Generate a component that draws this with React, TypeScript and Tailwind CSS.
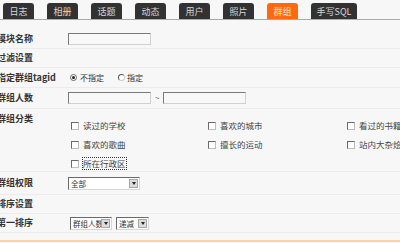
import React from "react";

const tabs = ["日志", "相册", "话题", "动态", "用户", "照片", "群组", "手写SQL"];

function Input({ w }: { w: string }) {
  return (
    <div className={`${w} h-[12px] border border-t-[#7a7a7a] border-l-[#7a7a7a] border-r-[#d0d0d0] border-b-[#d0d0d0] bg-[#f8f8f8]`} />
  );
}

function Check({ label, focus }: { label: string; focus?: boolean }) {
  return (
    <div className="flex items-center gap-[4px]">
      <div className="w-[8px] h-[8px] shrink-0 border border-t-[#6a6a6a] border-l-[#6a6a6a] border-r-[#bdbdbd] border-b-[#bdbdbd] bg-white" />
      <span className={`text-[8.5px] leading-[11px] text-[#444] whitespace-nowrap ${focus ? "outline outline-1 outline-dotted outline-[#333]" : ""}`}>{label}</span>
    </div>
  );
}

function Select({ w, text }: { w: string; text: string }) {
  return (
    <div className={`${w} h-[13px] flex items-center border border-t-[#6a6a6a] border-l-[#6a6a6a] border-r-[#d8d8d8] border-b-[#d8d8d8] bg-white`}>
      <span className="flex-1 pl-[2px] text-[7.5px] leading-[11px] text-[#333] overflow-hidden whitespace-nowrap">{text}</span>
      <div className="w-[9px] h-[9px] shrink-0 mr-[1px] bg-[#dcdcdc] border border-[#a8a8a8] flex items-center justify-center">
        <div className="w-0 h-0 border-l-[2px] border-r-[2px] border-t-[3px] border-l-transparent border-r-transparent border-t-[#222]" />
      </div>
    </div>
  );
}

function Row({ label, children, cls }: { label: string; children?: React.ReactNode; cls: string }) {
  return (
    <div className={`flex items-center border-b border-[#ececec] ${cls}`}>
      <div className="w-[71px] shrink-0 -ml-[3px] text-[9px] font-bold text-[#333] whitespace-nowrap">{label}</div>
      {children}
    </div>
  );
}

export default function App() {
  return (
    <div
      className="w-[400px] h-[243px] bg-[#f7f7f7] overflow-hidden"
      style={{ fontFamily: '"Noto Sans CJK SC", "Noto Sans", sans-serif' }}
    >
      <div className="flex items-end gap-[13px] pl-[3px] pt-[3px] h-[20px] border-b border-[#a9a9a9]">
        {tabs.map((t) => (
          <div
            key={t}
            className={`h-[16px] ${t === "手写SQL" ? "w-[46px]" : "w-[31px]"} rounded-t-[3px] flex items-center justify-center text-[9px] leading-none ${
              t === "群组" ? "bg-[#ff6a0f] text-[#ffe7d6]" : "bg-[#323232] text-[#d8d8d8]"
            }`}
          >
            {t}
          </div>
        ))}
      </div>
      <div className="pt-[9px]">
        <Row label="模块名称" cls="h-[20px]">
          <Input w="w-[83px]" />
        </Row>
        <Row label="过滤设置" cls="h-[19px]" />
        <Row label="指定群组tagid" cls="h-[20px]">
          <div className="flex items-center text-[8px] text-[#333] ml-[2px]">
            <div className="w-[7px] h-[7px] rounded-full border border-[#666] bg-white flex items-center justify-center">
              <div className="w-[3px] h-[3px] rounded-full bg-[#222]" />
            </div>
            <span className="ml-[3px]">不指定</span>
            <div className="ml-[14px] w-[7px] h-[7px] rounded-full border border-t-[#555] border-l-[#555] border-r-[#ccc] border-b-[#ccc] bg-white" />
            <span className="ml-[2px]">指定</span>
          </div>
        </Row>
        <Row label="群组人数" cls="h-[21px]">
          <Input w="w-[83px]" />
          <span className="mx-[4px] text-[8px] text-[#555]">~</span>
          <Input w="w-[83px]" />
        </Row>
        <div className="flex border-b border-[#ececec] h-[63px] pt-[4px]">
          <div className="w-[71px] shrink-0 -ml-[3px] text-[9px] font-bold text-[#333] whitespace-nowrap leading-[11px]">群组分类</div>
          <div className="grid grid-cols-[137px_139px_60px] grid-rows-[19px_19px_19px] ml-[3px] pt-[7px] items-start">
            <Check label="读过的学校" />
            <Check label="喜欢的城市" />
            <Check label="看过的书籍" />
            <Check label="喜欢的歌曲" />
            <Check label="擅长的运动" />
            <Check label="站内大杂烩" />
            <Check label="所在行政区" focus />
          </div>
        </div>
        <Row label="群组权限" cls="h-[23px]">
          <Select w="w-[72px]" text="全部" />
        </Row>
        <Row label="排序设置" cls="h-[19px]" />
        <Row label="第一排序" cls="h-[19px]">
          <div className="flex items-center gap-[4px] ml-[2px]">
            <Select w="w-[42px]" text="群组人数" />
            <Select w="w-[33px]" text="递减" />
          </div>
        </Row>
      </div>
      <div className="mt-[7px] h-[2px] bg-[#f9d4a8]" />
    </div>
  );
}
